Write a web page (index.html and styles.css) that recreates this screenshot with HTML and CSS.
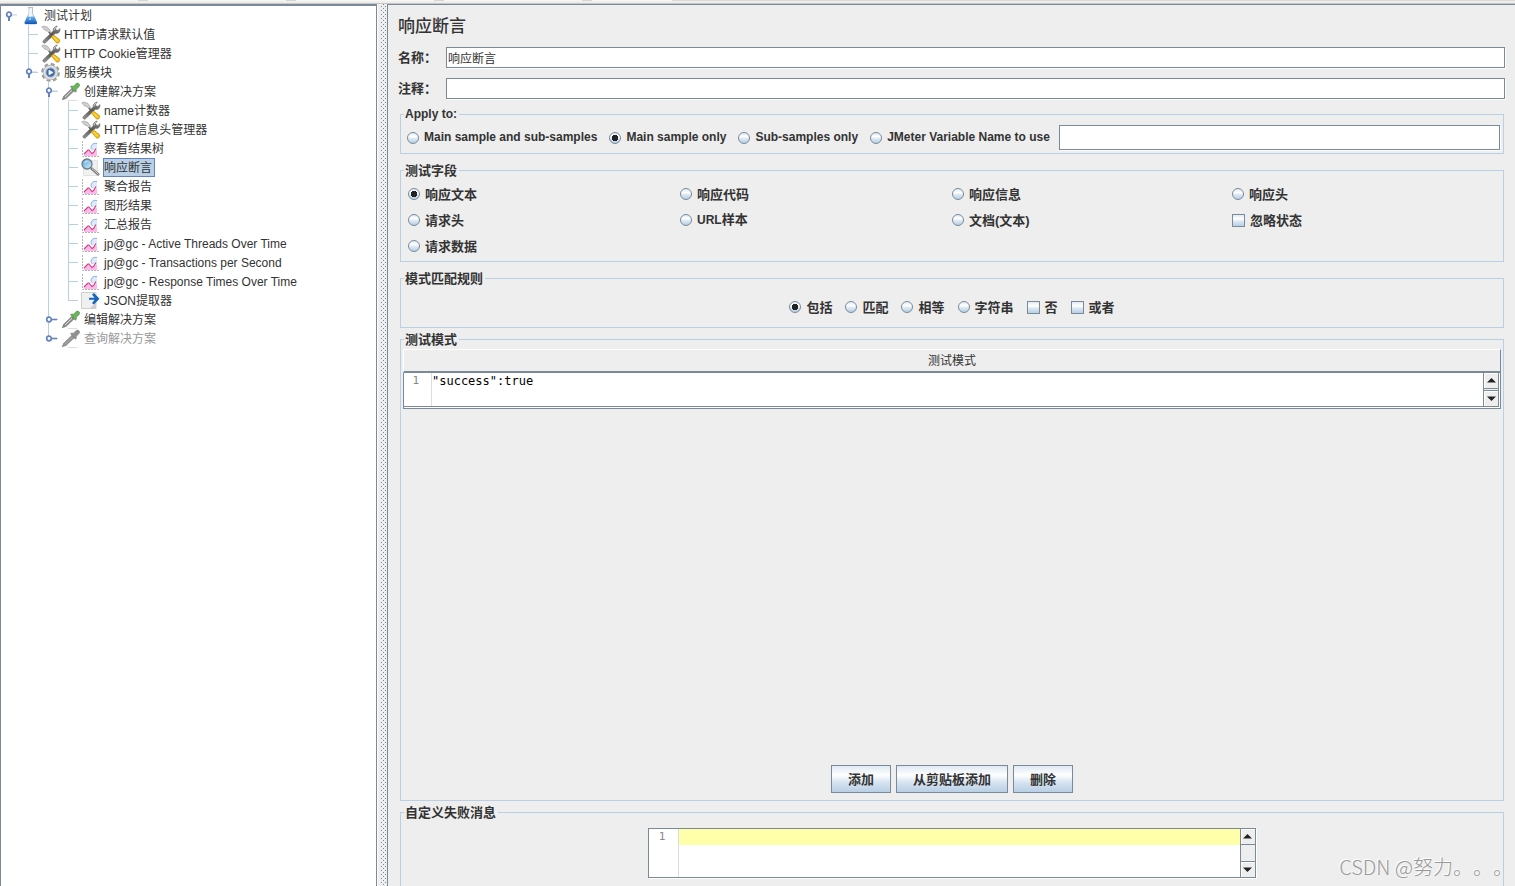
FILE: index.html
```html
<!DOCTYPE html>
<html lang="zh-CN">
<head>
<meta charset="utf-8">
<title>响应断言</title>
<link rel="stylesheet" href="styles.css">
</head>
<body>
<svg class="defs" aria-hidden="true">
  <defs>
    <linearGradient id="steel" x1="1" y1="0" x2="0" y2="1"><stop offset="0" stop-color="#8d8d8d"/><stop offset=".5" stop-color="#555"/><stop offset="1" stop-color="#999"/></linearGradient>
    <linearGradient id="lens" x1="0" y1="0" x2="1" y2="1"><stop offset="0" stop-color="#4fa3d8"/><stop offset="1" stop-color="#d8f1fc"/></linearGradient>
    <linearGradient id="water" x1="0" y1="0" x2="0" y2="1"><stop offset="0" stop-color="#6db2f2"/><stop offset="1" stop-color="#0d55b5"/></linearGradient>
  </defs>
  <symbol id="i-flask" viewBox="0 0 20 19">
    <path d="M7 1.500h5M8 2v5.500L3.500 16.500q0 1.500 1.500 1.500h9.500q1.500 0 1-1.500L11.500 7.500V2" fill="#eef4fa" stroke="#b4bfcc"/>
    <path d="M6.200 10.500h7.200l2.600 6q.4 1.500-1.500 1.500H5q-1.700 0-1.200-1.500z" fill="url(#water)"/>
    <path d="M9 3v8" stroke="#fff"/><circle cx="9" cy="13" r="1" fill="#a8d8ff"/>
  </symbol>
  <symbol id="i-tools" viewBox="0 0 20 19">
    <path d="M.8 1.800l2.200-.8 4 1.500 2.800 4-1.300 2L6.500 6 3.500 5z" fill="#cfcfcf" stroke="#999" stroke-width=".6"/>
    <path d="M8 7l3 4" stroke="#666" stroke-width="1.500"/>
    <path d="M16.300 1L14.500 3.200l.5 1.800 2 .4L19 3.500q.5 3-1.500 4.400-1.500.8-3 .3L4.500 17.800q-1.300.8-2.300-.2-.8-1.200.2-2.200L12 6.200Q12 1.800 16.300 1z" fill="url(#steel)" stroke="#5a5a5a" stroke-width=".5"/>
    <path d="M13 5.500Q13 3 15 2" fill="none" stroke="#e2e2e2" stroke-width=".9"/>
    <path d="M10.200 11.700l2.200-1.700 6 4.500q1 2-.6 3.300-1.600 1-2.900-.4z" fill="#f5c211" stroke="#a77b0b" stroke-width=".6"/>
    <path d="M12.500 12l4 4" stroke="#ffe66e"/>
  </symbol>
  <symbol id="i-gear" viewBox="0 0 20 19">
    <circle cx="9.500" cy="9.500" r="8.300" fill="none" stroke="#9e9e9e" stroke-width="2.200" stroke-dasharray="3.900 2.620"/>
    <circle cx="9.500" cy="9.500" r="7.400" fill="#dfdfdf" stroke="#a9a9a9" stroke-width=".8"/>
    <circle cx="9.500" cy="9.500" r="4.500" fill="#3f6bab" stroke="#8aa4c6"/>
    <path d="M8 7.200l4 2.300-4 2.300z" fill="#f4f8fc" stroke="#f4f8fc" stroke-width=".8"/>
  </symbol>
  <symbol id="i-dropper" viewBox="0 0 20 19">
    <path d="M7 18.500h9" stroke="#ddd"/>
    <path class="glass" d="M1.200 17.800l1.500-3.500L11 6.200l2.500 2.300L5 16.500z"/>
    <path class="glint" d="M4 15.200l7-6.900"/>
    <path class="bulb" d="M9.500 4.500l1.500-.5 1.500.3L15.500 1.200q2.500-.7 3.200 1.800-.2 2-3.500 4.200l.2 2-1.200 1z"/>
  </symbol>
  <symbol id="i-chart" viewBox="0 0 20 19">
    <path d="M1.500 2v15.500H18" fill="none" stroke="#b5b5b5" stroke-dasharray="2 1"/>
    <path d="M3 17v-2.500L7 10.500l4.500 4L16 10v7z" fill="#ffb8ea"/>
    <path d="M16 4.500q-5-1-6 3.500.5 4 6 4z" fill="#dceafb"/>
    <path d="M16 4.500q-5-1-6 3.500 0 2 1.500 3" fill="none" stroke="#8fb0dc"/>
    <path d="M3 15l4-4h1l3 3.500 1.500-1 2.500-4" fill="none" stroke="#cc3f7d" stroke-width="1.100"/>
  </symbol>
  <symbol id="i-lens" viewBox="0 0 20 19">
    <path d="M2.500 2.500h14v15h-14z" fill="#f1f1f1" stroke="#e2e2e2"/>
    <path d="M10 10l8 7" stroke="#777" stroke-width="2.600"/><path d="M11 10.500l6.500 5.700" stroke="#d7d7d7"/>
    <circle cx="6" cy="6" r="5" fill="url(#lens)" stroke="#6d7b86" stroke-width="1.300"/>
    <path d="M3.500 5q1-2 3-2" fill="none" stroke="#e7f8ff"/>
  </symbol>
  <symbol id="i-extract" viewBox="0 0 20 19">
    <path d="M.5 1.500h14.500v16H.500z" fill="#f0f0f0" stroke="#cfcfcf"/>
    <path d="M9 17l6-5v5z" fill="#cfcfcf"/>
    <path d="M8 6.800h5.500L11 3.500l2-1.500 5.500 5.800-5.500 5.700-2-1.300 2.500-3.400H8z" fill="#1766bd"/>
  </symbol>
  <symbol id="h-open" viewBox="0 0 13 13">
    <path d="M6 5h6" stroke="#b8cfe5"/><path d="M4 7v4" stroke="#6382bf" stroke-width="2"/>
    <circle cx="4" cy="4.500" r="2.300" fill="#fff" stroke="#6382bf" stroke-width="1.700"/>
  </symbol>
  <symbol id="h-closed" viewBox="0 0 13 13">
    <path d="M6 5.500h6" stroke="#6382bf" stroke-width="1.600"/>
    <circle cx="4" cy="5.500" r="2.300" fill="#fff" stroke="#6382bf" stroke-width="1.700"/>
  </symbol>
  <symbol id="a-up" viewBox="0 0 9 5"><path d="M0 4.500h9L4.500 0z" fill="#222"/></symbol>
  <symbol id="a-down" viewBox="0 0 9 5"><path d="M0 .5h9L4.500 5z" fill="#222"/></symbol>
</svg>

<div class="app">
  <div class="toolbar-edge"></div>
  <div class="split">
    <nav class="tree-pane" aria-label="测试计划">
      <ul class="tree">
        <li>
          <div class="row"><button class="handle" aria-label="折叠"><svg><use href="#h-open"/></svg></button><svg class="icon"><use href="#i-flask"/></svg><span class="name">测试计划</span></div>
          <ul>
            <li><div class="row"><svg class="icon"><use href="#i-tools"/></svg><span class="name">HTTP请求默认值</span></div></li>
            <li><div class="row"><svg class="icon"><use href="#i-tools"/></svg><span class="name">HTTP Cookie管理器</span></div></li>
            <li>
              <div class="row"><button class="handle" aria-label="折叠"><svg><use href="#h-open"/></svg></button><svg class="icon"><use href="#i-gear"/></svg><span class="name">服务模块</span></div>
              <ul>
                <li>
                  <div class="row"><button class="handle" aria-label="折叠"><svg><use href="#h-open"/></svg></button><svg class="icon"><use href="#i-dropper"/></svg><span class="name">创建解决方案</span></div>
                  <ul>
                    <li><div class="row"><svg class="icon"><use href="#i-tools"/></svg><span class="name">name计数器</span></div></li>
                    <li><div class="row"><svg class="icon"><use href="#i-tools"/></svg><span class="name">HTTP信息头管理器</span></div></li>
                    <li><div class="row"><svg class="icon"><use href="#i-chart"/></svg><span class="name">察看结果树</span></div></li>
                    <li><div class="row"><svg class="icon"><use href="#i-lens"/></svg><span class="name selected">响应断言</span></div></li>
                    <li><div class="row"><svg class="icon"><use href="#i-chart"/></svg><span class="name">聚合报告</span></div></li>
                    <li><div class="row"><svg class="icon"><use href="#i-chart"/></svg><span class="name">图形结果</span></div></li>
                    <li><div class="row"><svg class="icon"><use href="#i-chart"/></svg><span class="name">汇总报告</span></div></li>
                    <li><div class="row"><svg class="icon"><use href="#i-chart"/></svg><span class="name">jp@gc - Active Threads Over Time</span></div></li>
                    <li><div class="row"><svg class="icon"><use href="#i-chart"/></svg><span class="name">jp@gc - Transactions per Second</span></div></li>
                    <li><div class="row"><svg class="icon"><use href="#i-chart"/></svg><span class="name">jp@gc - Response Times Over Time</span></div></li>
                    <li><div class="row"><svg class="icon"><use href="#i-extract"/></svg><span class="name">JSON提取器</span></div></li>
                  </ul>
                </li>
                <li><div class="row"><button class="handle" aria-label="展开"><svg><use href="#h-closed"/></svg></button><svg class="icon"><use href="#i-dropper"/></svg><span class="name">编辑解决方案</span></div></li>
                <li><div class="row disabled"><button class="handle" aria-label="展开"><svg><use href="#h-closed"/></svg></button><svg class="icon"><use href="#i-dropper"/></svg><span class="name">查询解决方案</span></div></li>
              </ul>
            </li>
          </ul>
        </li>
      </ul>
    </nav>
    <div class="divider"></div>
    <main class="panel">
      <h1 class="title">响应断言</h1>
      <div class="field"><label for="name">名称：</label><input class="text" id="name" type="text" value="响应断言"></div>
      <div class="field"><label for="comment">注释：</label><input class="text" id="comment" type="text"></div>

      <fieldset class="group apply">
        <legend class="latin">Apply to:</legend>
        <div class="apply-row">
          <label class="option"><input type="radio" name="scope">Main sample and sub-samples</label>
          <label class="option"><input type="radio" name="scope" checked>Main sample only</label>
          <label class="option"><input type="radio" name="scope">Sub-samples only</label>
          <label class="option"><input type="radio" name="scope">JMeter Variable Name to use</label>
          <input class="text variable" type="text" aria-label="JMeter Variable Name">
        </div>
      </fieldset>

      <fieldset class="group">
        <legend>测试字段</legend>
        <div class="field-grid">
          <label class="option"><input type="radio" name="field" checked>响应文本</label>
          <label class="option"><input type="radio" name="field">响应代码</label>
          <label class="option"><input type="radio" name="field">响应信息</label>
          <label class="option"><input type="radio" name="field">响应头</label>
          <label class="option"><input type="radio" name="field">请求头</label>
          <label class="option"><input type="radio" name="field"><span><span class="latin">URL</span>样本</span></label>
          <label class="option"><input type="radio" name="field">文档(文本)</label>
          <label class="option"><input type="checkbox">忽略状态</label>
          <label class="option"><input type="radio" name="field">请求数据</label>
        </div>
      </fieldset>

      <fieldset class="group">
        <legend>模式匹配规则</legend>
        <div class="rules">
          <label class="option"><input type="radio" name="rule" checked>包括</label>
          <label class="option"><input type="radio" name="rule">匹配</label>
          <label class="option"><input type="radio" name="rule">相等</label>
          <label class="option"><input type="radio" name="rule">字符串</label>
          <label class="option"><input type="checkbox">否</label>
          <label class="option"><input type="checkbox">或者</label>
        </div>
      </fieldset>

      <fieldset class="group patterns">
        <legend>测试模式</legend>
        <table class="pattern-table">
          <thead><tr><th>测试模式</th></tr></thead>
          <tbody><tr><td>
            <div class="editor">
              <span class="gutter">1</span>
              <textarea aria-label="测试模式" spellcheck="false">"success":true</textarea>
              <div class="scroll"><button aria-label="向上"><svg><use href="#a-up"/></svg></button><button aria-label="向下"><svg><use href="#a-down"/></svg></button></div>
            </div>
          </td></tr></tbody>
        </table>
        <div class="actions">
          <button class="btn">添加</button>
          <button class="btn">从剪贴板添加</button>
          <button class="btn">删除</button>
        </div>
      </fieldset>

      <fieldset class="group message">
        <legend>自定义失败消息</legend>
        <div class="editor framed">
          <span class="gutter">1</span>
          <textarea class="current-line" aria-label="自定义失败消息" spellcheck="false"></textarea>
          <div class="scroll"><button aria-label="向上"><svg><use href="#a-up"/></svg></button><button aria-label="向下"><svg><use href="#a-down"/></svg></button></div>
        </div>
      </fieldset>
    </main>
  </div>
  <div class="watermark">CSDN @努力。。。</div>
</div>
</body>
</html>
```

FILE: styles.css
```css
:root {
  --edge: #7a8a99;
  --line: #b8cfe5;
  --accent: #6382bf;
  --face: #eeeeee;
  --ink: #333333;
  --shine: linear-gradient(#dfe9f3, #ffffff 35%, #dae6f2 60%, #b8cfe5);
  --glass: #8a8a8a;
  --glint: #e8e8e8;
  --bulb: #6bb35c;
  --bulb-edge: #4b8a40;
}

* { box-sizing: border-box; }

body {
  margin: 0;
  background: var(--face);
  color: var(--ink);
  font: 12px/19px "Liberation Sans", "Noto Sans CJK SC", sans-serif;
  text-spacing-trim: space-all;
}

button, input, textarea { font: inherit; color: inherit; }

.defs { position: absolute; width: 0; height: 0; }

.app {
  display: flex;
  flex-direction: column;
  height: 100vh;
  overflow: hidden;
}

.toolbar-edge {
  flex: none;
  height: 4px;
  border-bottom: 1px solid #c6c6c6;
  background:
    linear-gradient(transparent 1px, #efefea 1px),
    linear-gradient(90deg, transparent 672px, #dadada 672px),
    repeating-linear-gradient(90deg, #f7f7f8 0 138px, #d5d5da 138px 148px);
}

.split { display: flex; flex: 1; min-height: 0; }

/* Tree */
.tree-pane {
  flex: none;
  width: 377px;
  background: #fff;
  border: 1px solid var(--edge);
  border-top-width: 2px;
  border-bottom: 0;
}

.tree, .tree ul { list-style: none; margin: 0; padding: 0; }
.tree { padding-left: 7px; }
.tree ul { margin-left: 20px; }

.tree ul > li {
  background:
    linear-gradient(var(--line), var(--line)) 0 0 / 1px 100% no-repeat,
    linear-gradient(var(--line), var(--line)) 0 9px / 10px 1px no-repeat;
}
.tree ul > li:last-child {
  background-size: 1px 10px, 10px 1px;
}

.row {
  position: relative;
  display: flex;
  align-items: center;
  height: 19px;
  padding-left: 13px;
}

.handle {
  position: absolute;
  left: -3px;
  top: 4px;
  width: 13px;
  height: 13px;
  padding: 0;
  border: 0;
  background: none;
}
.handle svg { display: block; width: 13px; height: 13px; }

.icon { flex: none; width: 20px; height: 19px; }
.glass { fill: var(--glass); stroke: #666; stroke-width: 0.5px; }
.glint { stroke: var(--glint); }
.bulb { fill: var(--bulb); stroke: var(--bulb-edge); stroke-width: 0.6px; }
.disabled {
  --glass: #999;
  --glint: #a4a4a4;
  --bulb: #909090;
  --bulb-edge: #858585;
}

.name {
  height: 19px;
  margin-left: 2px;
  padding: 0 2px 0 0;
  border: 1px solid transparent;
  line-height: 18px;
  white-space: nowrap;
}
.name.selected { background: var(--line); border-color: var(--accent); }
.disabled .name { color: #999; }

.divider {
  flex: none;
  width: 10px;
  border-left: 1px solid #fff;
  background:
    conic-gradient(from 270deg at 1px 1px, var(--edge) 90deg, transparent 0) 4px 2px / 4px 4px,
    conic-gradient(from 270deg at 1px 1px, var(--edge) 90deg, transparent 0) 6px 4px / 4px 4px,
    var(--face);
  background-clip: content-box, content-box, border-box;
  background-origin: border-box;
  padding: 0 1px 0 3px;
}

/* Right panel */
.panel {
  display: flex;
  flex: 1;
  flex-direction: column;
  min-width: 0;
  padding: 0 10px;
  border-top: 1px solid var(--edge);
  border-left: 1px solid var(--edge);
}

.title {
  flex: none;
  height: 42px;
  margin: 0;
  font-size: 17px;
  font-weight: 500;
  line-height: 44px;
}

.field {
  display: flex;
  flex: none;
  align-items: center;
  height: 21px;
  margin-bottom: 10px;
  font-size: 13px;
  font-weight: bold;
}
.field label { flex: none; width: 48px; }
.field .text { flex: 1; height: 21px; }

.text {
  min-width: 0;
  padding: 0 1px;
  border: 1px solid var(--edge);
  border-radius: 0;
  background: #fff;
  box-shadow: 1px 1px 0 #fff;
  font-size: 12px;
  font-weight: normal;
  outline: 0;
}

.group {
  flex: none;
  min-width: 0;
  margin: 8px 1px 0 2px;
  padding: 0 2px;
  border: 1px solid var(--line);
  font-size: 13px;
  font-weight: bold;
}
.group legend {
  height: 16px;
  margin-left: 1px;
  padding: 0 2px 0 1px;
  line-height: 17px;
}
.latin, .apply, .group .latin { font-size: 12px; }
.group.apply { margin-top: -3px; font-size: 12px; }

.option {
  display: flex;
  align-items: center;
  gap: 5px;
  white-space: nowrap;
}
.option input {
  appearance: none;
  flex: none;
  width: 12px;
  height: 12px;
  margin: 0;
  border: 1px solid var(--edge);
  background: var(--shine);
}
.option input[type="radio"] { border-radius: 50%; }
.option input[type="radio"]:checked {
  background: radial-gradient(circle, #222 0 3px, transparent 3px), var(--shine);
}
.option input[type="checkbox"] { width: 13px; height: 13px; }

.apply-row {
  display: flex;
  align-items: center;
  gap: 12px;
  padding: 3px 1px 3px 4px;
}
.variable { flex: 1; height: 25px; margin-left: -3px; }

.field-grid {
  display: grid;
  grid-template-columns: 272fr 272fr 280fr 269fr;
  grid-auto-rows: 26px;
  padding: 3px 0 2px 5px;
}

.rules {
  display: flex;
  justify-content: center;
  gap: 13px;
  height: 41px;
  padding: 8px 0 7px;
}

.group.patterns {
  display: flex;
  flex: 1;
  flex-direction: column;
  margin-top: 3px;
  padding-bottom: 7px;
}

.pattern-table {
  width: 100%;
  margin-top: 2px;
  border-collapse: separate;
  border-spacing: 0;
  font-weight: normal;
}
.pattern-table th {
  height: 24px;
  padding: 2px 0 0;
  border: 1px solid #fff;
  border-right-color: var(--edge);
  border-bottom: 2px solid var(--edge);
  font-size: 12px;
  font-weight: normal;
  line-height: 19px;
}
.pattern-table td {
  padding: 0 1px 1px 0;
  border: 1px solid var(--edge);
  border-top: 0;
  background: #fff;
}
.pattern-table .editor { height: 34px; border-bottom: 1px solid var(--edge); }

.editor {
  display: flex;
  background: #fff;
  font: 12px/16px "DejaVu Sans Mono", monospace;
}
.gutter {
  flex: none;
  width: 28px;
  padding-right: 12px;
  border-right: 1px solid #ddd;
  color: #888;
  font-size: 11px;
  text-align: right;
}
.editor textarea {
  flex: 1;
  min-width: 0;
  padding: 0;
  border: 0;
  background: none;
  color: #000;
  outline: 0;
  overflow: hidden;
  resize: none;
}
.editor .current-line { background: linear-gradient(#ffffaa, #ffffaa) 0 0 / 100% 16px no-repeat; }

.scroll {
  display: flex;
  flex: none;
  flex-direction: column;
  justify-content: space-between;
  width: 16px;
  border: solid var(--edge);
  border-width: 0 1px;
  background: var(--face);
}
.scroll button {
  display: flex;
  align-items: center;
  justify-content: center;
  height: 16px;
  padding: 0;
  border: 1px solid var(--edge);
  border-width: 0 0 1px;
  background: var(--face);
  box-shadow: inset 1px 1px 0 #fff;
}
.scroll button:last-child { border-width: 1px 0 0; }
.scroll svg { width: 9px; height: 5px; }

.actions {
  display: flex;
  justify-content: center;
  gap: 5px;
  margin-top: auto;
}
.btn {
  height: 28px;
  padding: 0 16px;
  border: 1px solid var(--edge);
  border-radius: 0;
  background: var(--shine);
  font-weight: bold;
}

.group.message {
  height: 82px;
  margin-top: 3px;
  border-bottom: 0;
}
.framed {
  width: 55.3%;
  height: 50px;
  margin: 8px auto 0;
  border: 1px solid var(--edge);
  box-shadow: 1px 1px 0 #fff;
}
.framed .gutter { width: 30px; padding-right: 13px; }
.framed .scroll { border-right: 0; width: 15px; }

.watermark {
  position: absolute;
  right: 2px;
  bottom: 4px;
  color: #999;
  font: 300 20px/30px "Noto Sans CJK SC", sans-serif;
  text-shadow: -1px -1px 0 #fff;
}
```
